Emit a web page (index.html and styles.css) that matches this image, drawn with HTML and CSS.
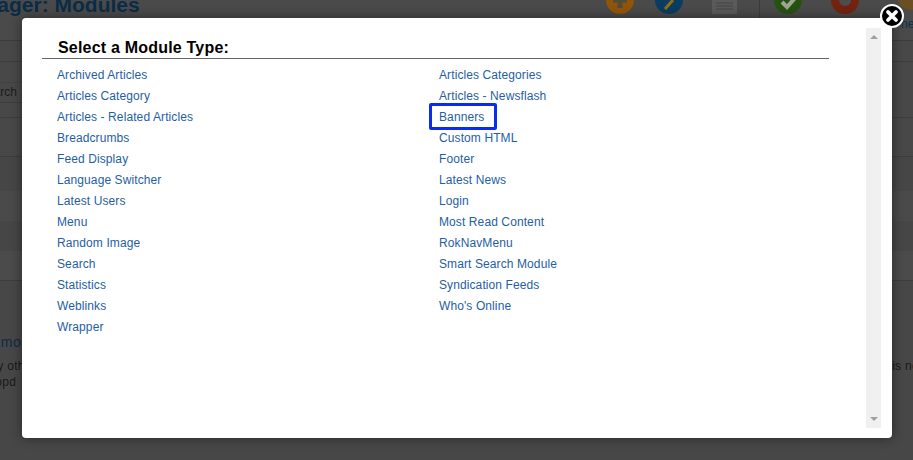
FILE: index.html
```html
<!DOCTYPE html>
<html lang="en">
<head>
<meta charset="utf-8">
<title>Module Manager: Modules</title>
<link rel="stylesheet" href="styles.css">
</head>
<body>
<div class="page">
  <header class="topbar">
    <h1 class="title">Module Manager: Modules</h1>
    <div class="tools">
      <svg class="tool" width="30" height="16" viewBox="0 0 30 16"><circle cx="15" cy="0" r="14" fill="#8f560a"/><path d="M15 -6V8M8 0H22" stroke="#544a3a" stroke-width="5"/></svg>
      <svg class="tool tool-edit" width="30" height="16" viewBox="0 0 30 16"><circle cx="15" cy="0" r="14" fill="#0a3d60"/><path d="M11 9L19 0" stroke="#8f6d18" stroke-width="3"/></svg>
      <svg class="tool tool-doc" width="32" height="16" viewBox="0 0 32 16"><path d="M3 0H28V14H3Z" fill="#5a5a5a"/><path d="M7 3H24M7 6H24M7 9H24" stroke="#444" stroke-width="1"/></svg>
      <span class="sep"></span>
      <svg class="tool tool-ok" width="30" height="16" viewBox="0 0 30 16"><circle cx="15" cy="0" r="14" fill="#265210"/><path d="M9 2L14 7L22 -2" fill="none" stroke="#9aa592" stroke-width="4"/></svg>
      <svg class="tool tool-stop" width="30" height="16" viewBox="0 0 30 16"><circle cx="15" cy="0" r="14" fill="#742310"/><circle cx="15" cy="0" r="6" fill="#4d4d4d"/></svg>
      <svg class="tool tool-gear" width="30" height="16" viewBox="0 0 30 16"><circle cx="15" cy="-4" r="14" fill="#6a4e24"/></svg>
    </div>
    <span class="tool-label">ne</span>
  </header>
  <div class="band band-a"></div>
  <div class="band band-b"><span class="dim-text">Search</span></div>
  <div class="band band-c"></div>
  <div class="band band-d"></div>
  <div class="band band-e"></div>
  <div class="band band-f"></div>
  <div class="band band-g"></div>
  <div class="footer-area">
    <p class="more">Read more</p>
    <div class="notes">
      <p class="note">Many oth</p>
      <p class="note note-right">this ne</p>
    </div>
    <p class="note note-low">dropd</p>
  </div>
</div>

<div class="modal">
  <div class="modal-body">
    <h2 class="modal-title">Select a Module Type:</h2>
    <ul class="types">
      <li><a href="#">Archived Articles</a></li>
      <li><a href="#">Articles Categories</a></li>
      <li><a href="#">Articles Category</a></li>
      <li><a href="#">Articles - Newsflash</a></li>
      <li><a href="#">Articles - Related Articles</a></li>
      <li><a href="#" class="marked">Banners</a></li>
      <li><a href="#">Breadcrumbs</a></li>
      <li><a href="#">Custom HTML</a></li>
      <li><a href="#">Feed Display</a></li>
      <li><a href="#">Footer</a></li>
      <li><a href="#">Language Switcher</a></li>
      <li><a href="#">Latest News</a></li>
      <li><a href="#">Latest Users</a></li>
      <li><a href="#">Login</a></li>
      <li><a href="#">Menu</a></li>
      <li><a href="#">Most Read Content</a></li>
      <li><a href="#">Random Image</a></li>
      <li><a href="#">RokNavMenu</a></li>
      <li><a href="#">Search</a></li>
      <li><a href="#">Smart Search Module</a></li>
      <li><a href="#">Statistics</a></li>
      <li><a href="#">Syndication Feeds</a></li>
      <li><a href="#">Weblinks</a></li>
      <li><a href="#">Who's Online</a></li>
      <li><a href="#">Wrapper</a></li>
    </ul>
  </div>
  <div class="scrollbar">
    <span class="arrow arrow-up"></span>
    <span class="arrow arrow-down"></span>
  </div>
</div>

<svg class="close" width="28" height="28" viewBox="0 0 28 28" aria-label="Close">
  <circle cx="14" cy="14" r="11" fill="#000" stroke="#fff" stroke-width="2"/>
  <path d="M10 10L18 18M18 10L10 18" stroke="#fff" stroke-width="3.8" stroke-linecap="round"/>
</svg>
</body>
</html>
```
FILE: styles.css
```css
html, body {
  margin: 0;
  padding: 0;
  height: 100%;
}
body {
  background: #474747;
  font-family: "Liberation Sans", Arial, sans-serif;
  overflow: hidden;
  position: relative;
}
.page {
  width: 913px;
  height: 460px;
  overflow: hidden;
}
.topbar {
  height: 40px;
  border-bottom: 1px solid #3d3d3d;
  background: #4a4a4a;
  position: relative;
  display: flex;
}
.title {
  margin: -10px 0 0 -124px;
  font-size: 21px;
  line-height: 30px;
  font-weight: bold;
  color: #0a2c47;
  white-space: nowrap;
}
.tools {
  position: absolute;
  left: 605px;
  top: 0;
  display: flex;
  align-items: flex-start;
}
.tool { display: block; }
.tool-edit { margin-left: 19px; }
.tool-doc { margin-left: 25px; }
.sep {
  width: 1px;
  height: 18px;
  margin-left: 18px;
  background: #3c3c3c;
}
.tool-ok { margin-left: 13px; }
.tool-stop { margin-left: 27px; }
.tool-gear { margin-left: 36px; }
.tool-label {
  position: absolute;
  left: 901px;
  top: 17px;
  font-size: 12px;
  color: #0f3048;
}
.band {
  box-sizing: border-box;
  border-bottom: 1px solid #3d3d3d;
  background: #484848;
}
.band-a { height: 21px; }
.band-b { height: 56px; padding-top: 20px; }
.dim-text {
  display: block;
  width: 22px;
  height: 21px;
  box-sizing: border-box;
  border-top: 1px solid #424242;
  border-bottom: 1px solid #3d3d3d;
  font-size: 12px;
  line-height: 19px;
  text-indent: -21px;
  white-space: nowrap;
  color: #1c1c1c;
}
.band-c { height: 39px; }
.band-d { height: 34px; background: #464646; border-bottom: 0; }
.band-e { height: 30px; background: #4a4a4a; border-bottom: 0; }
.band-f { height: 30px; background: #464646; border-bottom: 0; }
.band-g { height: 30px; background: #4b4b4b; }
.footer-area { padding-top: 53px; }
.more {
  margin: 0 0 9px -39px;
  font-size: 14px;
  line-height: 16px;
  letter-spacing: 0.5px;
  color: #0e2c44;
}
.notes {
  display: flex;
  justify-content: space-between;
  margin-right: -6px;
}
.note {
  margin: 0 0 2px -27px;
  font-size: 12px;
  line-height: 14px;
  letter-spacing: 0.3px;
  color: #1a1a1a;
}
.note-right { margin-left: 0; }
.note-low { margin-left: -16px; }

.modal {
  position: absolute;
  left: 22px;
  top: 18px;
  width: 870px;
  height: 420px;
  background: #fff;
  border-radius: 4px;
  box-shadow: 0 0 12px rgba(0, 0, 0, 0.45);
  box-sizing: border-box;
  padding: 10px 11px 10px 20px;
  display: flex;
  justify-content: space-between;
}
.modal-body { width: 787px; }
.modal-title {
  margin: 0;
  padding: 10px 0 0 16px;
  height: 20px;
  font-size: 16px;
  line-height: 20px;
  font-weight: bold;
  letter-spacing: 0.2px;
  color: #000;
  border-bottom: 1px solid #666;
}
.types {
  list-style: none;
  margin: 0;
  padding: 6px 0 0 15px;
  display: grid;
  grid-template-columns: 382px 1fr;
  grid-auto-rows: 21px;
}
.types li {
  font-size: 12px;
  line-height: 21px;
  letter-spacing: 0.1px;
}
.types a {
  color: #1f60a3;
  text-decoration: none;
}
.marked { position: relative; }
.marked::after {
  content: "";
  position: absolute;
  left: -10px;
  top: -7px;
  width: 62px;
  height: 21px;
  border: 3px solid #0b2cf0;
  border-radius: 2px;
}
.scrollbar {
  width: 15px;
  height: 100%;
  background: #f0f0f0;
  position: relative;
}
.arrow {
  position: absolute;
  left: 4px;
  width: 0;
  height: 0;
  border-left: 4px solid transparent;
  border-right: 4px solid transparent;
}
.arrow-up { top: 7px; border-bottom: 4px solid #a0a0a0; }
.arrow-down { bottom: 7px; border-top: 4px solid #a0a0a0; }
.close {
  position: absolute;
  left: 878px;
  top: 2px;
}
```
